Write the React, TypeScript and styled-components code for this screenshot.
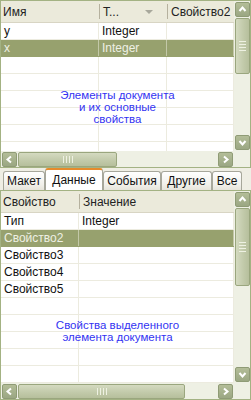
import React from "react";
import styled, { createGlobalStyle, css } from "styled-components";

const GlobalStyle = createGlobalStyle`
  body {
    margin: 0;
    font-family: "Liberation Sans", Arial, sans-serif;
    font-size: 11px;
  }
`;

const Window = styled.div`
  width: 251px;
  height: 400px;
  display: flex;
  flex-direction: column;
  background-color: #efeee4;
  overflow: hidden;
`;

const Panel = styled.div<{ $height: number }>`
  height: ${(p) => p.$height}px;
  box-sizing: border-box;
  border: 1px solid #a3b283;
  display: grid;
  grid-template-columns: 1fr 16px;
  grid-template-rows: 1fr 16px;
  background-color: #fff;
`;

const GridArea = styled.div`
  position: relative;
  overflow: hidden;
  display: flex;
  flex-direction: column;
`;

const HeaderRow = styled.div<{ $cols: string }>`
  height: 21px;
  flex: none;
  display: grid;
  grid-template-columns: ${(p) => p.$cols};
  background-color: #ebeadb;
  border-bottom: 1px solid #d8d5c4;
  color: #222;
  font-size: 12px;
`;

const HeaderCell = styled.div<{ $sep?: boolean }>`
  display: flex;
  align-items: center;
  gap: 4px;
  padding-left: ${(p) => (p.$sep ? "3px" : "2px")};
  border-left: ${(p) => (p.$sep ? "1px solid #b5b19e" : "none")};
  margin: ${(p) => (p.$sep ? "3px 0" : "0")};
  white-space: nowrap;
  overflow: hidden;
`;

const SortArrow = styled.span`
  margin-left: auto;
  margin-right: 14px;
  width: 0;
  height: 0;
  border-left: 4px solid transparent;
  border-right: 4px solid transparent;
  border-top: 4px solid #a8a89c;
`;

const Row = styled.div<{ $cols: string; $selected?: boolean }>`
  height: 17px;
  flex: none;
  box-sizing: border-box;
  display: grid;
  grid-template-columns: ${(p) => p.$cols};
  border-bottom: 1px solid #ecebdf;
  color: #111;
  font-size: 12px;
  ${(p) =>
    p.$selected &&
    css`
      background-color: #97a16e;
      color: #eef0e4;
      border-bottom-color: #97a16e;
    `}
`;

const Cell = styled.div<{ $selected?: boolean }>`
  padding-left: 3px;
  line-height: 16px;
  border-right: 1px solid ${(p) => (p.$selected ? "#c3c8a8" : "#ecebdf")};
  white-space: nowrap;
  overflow: hidden;
`;

const Hint = styled.div<{ $top: number }>`
  position: absolute;
  left: 0;
  right: 0;
  top: ${(p) => p.$top}px;
  text-align: center;
  color: #3333f2;
  font-size: 11.5px;
  line-height: 12px;
  pointer-events: none;
`;

const VScroll = styled.div`
  background-color: #eef0e4;
  display: flex;
  flex-direction: column;
  align-items: center;
  padding: 1px 0;
  gap: 1px;
`;

const HScroll = styled.div`
  background-color: #eef0e4;
  display: flex;
  align-items: center;
  padding: 0 1px;
  gap: 1px;
`;

const Corner = styled.div`
  background-color: #eef0e4;
`;

const ScrollButton = styled.div`
  width: 15px;
  height: 15px;
  flex: none;
  box-sizing: border-box;
  border-radius: 2px;
  background: linear-gradient(#b3bd98, #9ba783);
  border: 1px solid #8f9b76;
  display: flex;
  align-items: center;
  justify-content: center;
`;

const Thumb = styled.div<{ $vertical?: boolean }>`
  flex: none;
  box-sizing: border-box;
  border: 1px solid #9aa67e;
  border-radius: 2px;
  display: flex;
  align-items: center;
  justify-content: center;
  ${(p) =>
    p.$vertical
      ? css`
          width: 15px;
          flex-direction: column;
          gap: 2px;
          background: linear-gradient(90deg, #d4dac0, #c1c9a9 60%, #b6bf9c);
        `
      : css`
          height: 15px;
          gap: 2px;
          background: linear-gradient(#d4dac0, #c1c9a9 60%, #b6bf9c);
        `}
`;

const Grip = styled.span<{ $vertical?: boolean }>`
  background-color: #eef1e2;
  ${(p) =>
    p.$vertical
      ? css`
          width: 7px;
          height: 1px;
        `
      : css`
          width: 1px;
          height: 7px;
        `}
`;

const Spacer = styled.div`
  flex: 1;
`;

const Chevron = ({ dir }: { dir: "up" | "down" | "left" | "right" }) => {
  const pts = {
    up: "3.5,8 6.5,4.5 9.5,8",
    down: "3.5,5 6.5,8.5 9.5,5",
    left: "8,3.5 4.5,6.5 8,9.5",
    right: "5,3.5 8.5,6.5 5,9.5",
  }[dir];
  return (
    <svg width="13" height="13" viewBox="0 0 13 13">
      <polyline points={pts} fill="none" stroke="#fff" strokeWidth="2" />
    </svg>
  );
};

const Grips = ({ vertical }: { vertical?: boolean }) => (
  <>
    <Grip $vertical={vertical} />
    <Grip $vertical={vertical} />
    <Grip $vertical={vertical} />
    <Grip $vertical={vertical} />
  </>
);

const VerticalBar = ({ thumb }: { thumb: number }) => (
  <VScroll>
    <ScrollButton>
      <Chevron dir="up" />
    </ScrollButton>
    <Thumb $vertical style={{ height: thumb }}>
      <Grips vertical />
    </Thumb>
    <Spacer />
    <ScrollButton>
      <Chevron dir="down" />
    </ScrollButton>
  </VScroll>
);

const HorizontalBar = ({ thumb }: { thumb: number }) => (
  <HScroll>
    <ScrollButton>
      <Chevron dir="left" />
    </ScrollButton>
    <Thumb style={{ width: thumb }}>
      <Grips />
    </Thumb>
    <Spacer />
    <ScrollButton>
      <Chevron dir="right" />
    </ScrollButton>
  </HScroll>
);

const TabStrip = styled.div`
  height: 22px;
  flex: none;
  display: flex;
  align-items: flex-end;
  padding-left: 3px;
  box-sizing: border-box;
`;

const Tab = styled.div<{ $active?: boolean; $width: number }>`
  width: ${(p) => p.$width}px;
  box-sizing: border-box;
  display: flex;
  align-items: center;
  justify-content: center;
  font-size: 12px;
  color: #111;
  border: 1px solid #a7a79b;
  border-bottom: none;
  border-radius: 3px 3px 0 0;
  ${(p) =>
    p.$active
      ? css`
          height: 22px;
          background-color: #fff;
          border-top: 2px solid #e68b2c;
          padding-bottom: 1px;
        `
      : css`
          height: 19px;
          background: linear-gradient(#ffffff, #f1f0ea 70%, #e6e4da);
        `}
`;

const topCols = "98px 68px 1fr";
const bottomCols = "78px 1fr";

const topRows = [
  { name: "y", type: "Integer", selected: false },
  { name: "x", type: "Integer", selected: true },
];

const bottomRows = [
  { prop: "Тип", value: "Integer", selected: false },
  { prop: "Свойство2", value: "", selected: true },
  { prop: "Свойство3", value: "", selected: false },
  { prop: "Свойство4", value: "", selected: false },
  { prop: "Свойство5", value: "", selected: false },
];

const fillers = (n: number) => Array.from({ length: n }, (_, i) => i);

const tabs = [
  { label: "Макет", width: 42 },
  { label: "Данные", width: 58 },
  { label: "События", width: 58 },
  { label: "Другие", width: 51 },
  { label: "Все", width: 30 },
];

export default function App() {
  return (
    <>
      <GlobalStyle />
      <Window>
        <Panel $height={168}>
          <GridArea>
            <HeaderRow $cols={topCols}>
              <HeaderCell>Имя</HeaderCell>
              <HeaderCell $sep>
                Т...
                <SortArrow />
              </HeaderCell>
              <HeaderCell $sep>Свойство2</HeaderCell>
            </HeaderRow>
            {topRows.map((r) => (
              <Row key={r.name} $cols={topCols} $selected={r.selected}>
                <Cell $selected={r.selected}>{r.name}</Cell>
                <Cell $selected={r.selected}>{r.type}</Cell>
                <Cell $selected={r.selected} />
              </Row>
            ))}
            {fillers(6).map((i) => (
              <Row key={i} $cols={topCols}>
                <Cell />
                <Cell />
                <Cell />
              </Row>
            ))}
            <Hint $top={88}>
              Элементы документа
              <br />и их основные
              <br />
              свойства
            </Hint>
          </GridArea>
          <VerticalBar thumb={56} />
          <HorizontalBar thumb={99} />
          <Corner />
        </Panel>
        <TabStrip>
          {tabs.map((t) => (
            <Tab key={t.label} $width={t.width} $active={t.label === "Данные"}>
              {t.label}
            </Tab>
          ))}
        </TabStrip>
        <Panel $height={210}>
          <GridArea>
            <HeaderRow $cols={bottomCols}>
              <HeaderCell>Свойство</HeaderCell>
              <HeaderCell $sep>Значение</HeaderCell>
            </HeaderRow>
            {bottomRows.map((r) => (
              <Row key={r.prop} $cols={bottomCols} $selected={r.selected}>
                <Cell $selected={r.selected}>{r.prop}</Cell>
                <Cell $selected={r.selected}>{r.value}</Cell>
              </Row>
            ))}
            {fillers(6).map((i) => (
              <Row key={i} $cols={bottomCols}>
                <Cell />
                <Cell />
              </Row>
            ))}
            <Hint $top={128}>
              Свойства выделенного
              <br />
              элемента документа
            </Hint>
          </GridArea>
          <VerticalBar thumb={78} />
          <HorizontalBar thumb={167} />
          <Corner />
        </Panel>
      </Window>
    </>
  );
}
